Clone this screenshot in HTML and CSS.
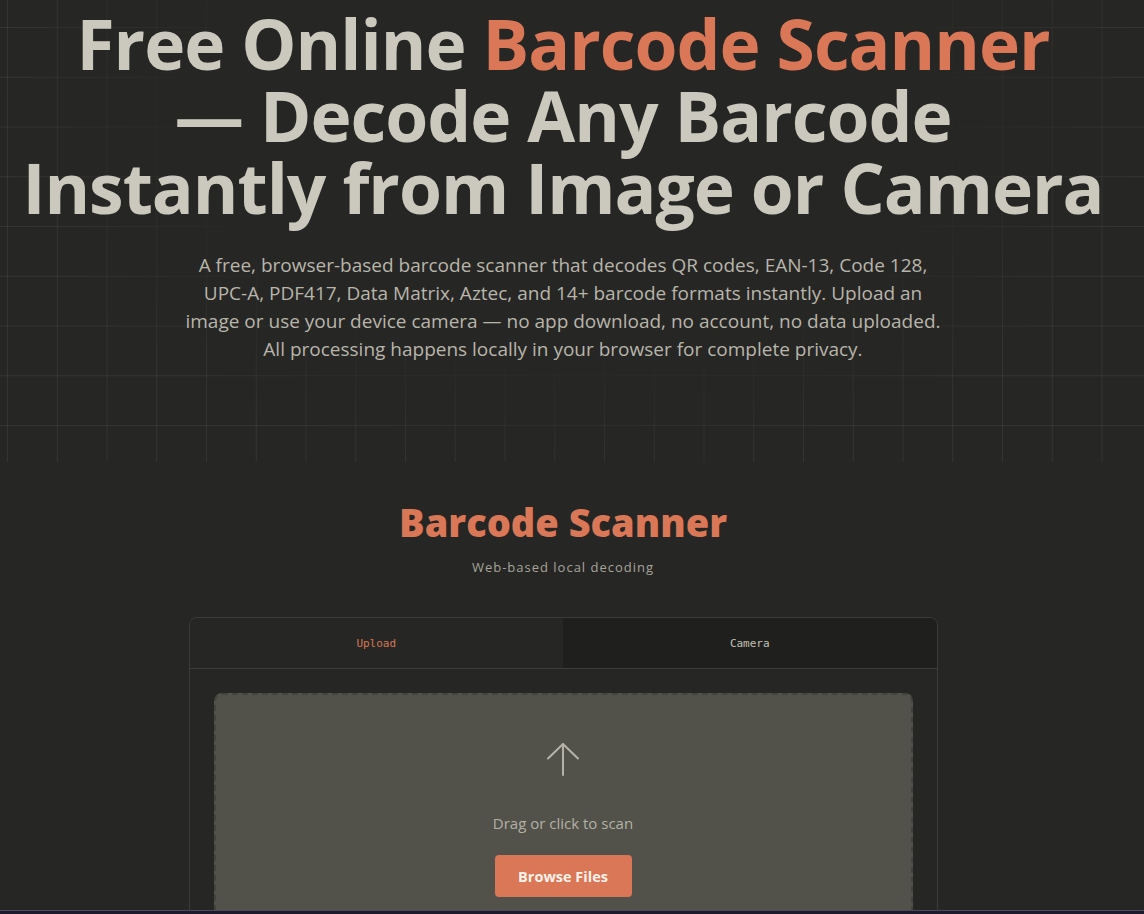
FILE: index.html
```html
<!DOCTYPE html>
<html lang="en">
<head>
<meta charset="utf-8">
<title>Free Online Barcode Scanner</title>
<link rel="stylesheet" href="styles.css">
</head>
<body>
<header class="hero">
  <div class="hero-grid" aria-hidden="true"></div>
  <div class="hero-inner">
    <h1 class="hero-title">Free Online <span class="accent">Barcode Scanner</span><br>— Decode Any Barcode<br>Instantly from Image or Camera</h1>
    <p class="hero-lead">A free, browser-based barcode scanner that decodes QR codes, EAN-13, Code 128,<br>UPC-A, PDF417, Data Matrix, Aztec, and 14+ barcode formats instantly. Upload an<br>image or use your device camera — no app download, no account, no data uploaded.<br>All processing happens locally in your browser for complete privacy.</p>
  </div>
</header>

<main class="tool">
  <h2 class="tool-title">Barcode Scanner</h2>
  <p class="tool-sub">Web-based local decoding</p>

  <section class="card">
    <div class="tabs">
      <button class="tab tab-active">Upload</button>
      <button class="tab">Camera</button>
    </div>
    <div class="card-body">
      <div class="dropzone">
        <svg class="drop-icon" width="36" height="36" viewBox="0 0 36 36" fill="none" stroke="currentColor" stroke-width="2" stroke-linecap="round" stroke-linejoin="round">
          <path d="M18 34V3"/>
          <path d="M3 17.5L18 3l15 14.5"/>
        </svg>
        <p class="drop-text">Drag or click to scan</p>
        <button class="btn-browse">Browse Files</button>
      </div>
    </div>
  </section>
</main>

<div class="bottom-bar" aria-hidden="true"></div>
</body>
</html>
```

FILE: styles.css
```css
* { box-sizing: border-box; }

html, body {
  margin: 0;
  padding: 0;
  background: #262624;
  color: #c9c7bd;
  font-family: "Open Sans", "Noto Sans", sans-serif;
}

.hero {
  position: relative;
  padding: 7px 18px 0 0;
  height: 462px;
  overflow: hidden;
}

.hero-grid {
  position: absolute;
  inset: 0;
  background-image:
    linear-gradient(to right, rgba(255,255,255,0.065) 1px, transparent 1px),
    linear-gradient(to bottom, rgba(255,255,255,0.065) 1px, transparent 1px);
  background-size: 49.75px 49.75px;
  background-position: 7px 27px;
  -webkit-mask-image: radial-gradient(ellipse 50% 80% at 50% 25%, transparent 60%, #000 100%);
  mask-image: radial-gradient(ellipse 50% 80% at 50% 25%, transparent 60%, #000 100%);
}

.hero-inner {
  position: relative;
  text-align: center;
}

.hero-title {
  margin: 0;
  font-size: 69.5px;
  line-height: 72px;
  font-weight: 700;
  letter-spacing: -1px;
  color: #cbc8be;
}

.accent { color: #d97757; }

.hero-lead {
  margin: 28px auto 0;
  font-size: 19px;
  line-height: 28px;
  color: #b8b5ab;
}

.tool {
  display: flex;
  flex-direction: column;
  align-items: center;
  padding: 0 18px 40px 0;
}

.tool-title {
  margin: 36px 0 0;
  font-size: 38px;
  line-height: 48px;
  font-weight: 800;
  color: #d97757;
}

.tool-sub {
  margin: 12px 0 0;
  font-size: 13px;
  letter-spacing: 1px;
  color: #a7a49a;
}

.card {
  margin-top: 41px;
  width: 749px;
  border: 1px solid #3b3b38;
  border-radius: 8px;
  overflow: hidden;
}

.tabs {
  display: grid;
  grid-template-columns: 1fr 1fr;
  border-bottom: 1px solid #3b3b38;
}

.tab {
  height: 50px;
  border: 0;
  background: #1f1f1d;
  color: #c3c0b6;
  font-family: "DejaVu Sans Mono", "Liberation Mono", monospace;
  font-size: 11px;
  cursor: pointer;
}

.tab-active {
  background: #262624;
  color: #d97757;
}

.card-body { padding: 24px; }

.dropzone {
  display: flex;
  flex-direction: column;
  align-items: center;
  padding: 46px 20px 60px;
  background: #52524a;
  border: 2px dashed #44443e;
  border-radius: 8px;
}

.drop-icon {
  color: #b5b2a8;
  width: 36px;
  height: 36px;
}

.drop-text {
  margin: 36px 0 0;
  font-size: 15px;
  color: #b3b0a6;
}

.btn-browse {
  margin-top: 22px;
  width: 137px;
  height: 42px;
  border: 0;
  border-radius: 4px;
  background: #d97757;
  color: #f7f2ea;
  font-family: "Open Sans", "Noto Sans", sans-serif;
  font-size: 14.5px;
  font-weight: 700;
  cursor: pointer;
}

.bottom-bar {
  position: fixed;
  left: 0;
  right: 0;
  bottom: 0;
  height: 4px;
  background: #1d1b2b;
  border-top: 1px solid #4b4a5e;
}
```
